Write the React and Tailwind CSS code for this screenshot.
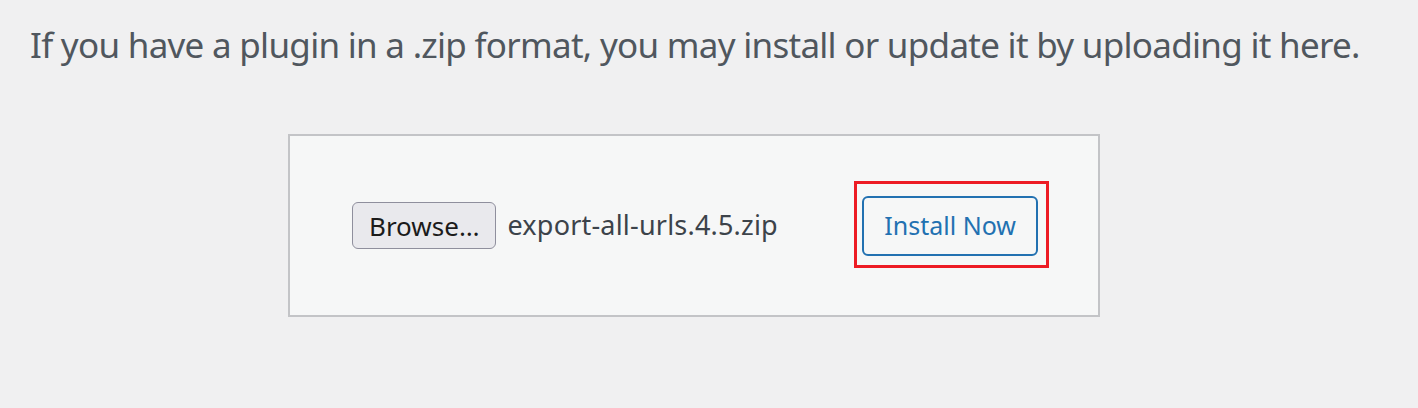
export default function App() {
  return (
    <div className="min-h-[408px] w-[1418px] bg-[#f0f0f1] font-['Noto_Sans',sans-serif] overflow-hidden">
      <p className="pl-[30px] pt-[21px] text-[35px] tracking-[-0.72px] leading-[48px] text-[#50575e] whitespace-nowrap">
        If you have a plugin in a .zip format, you may install or update it by uploading it here.
      </p>
      <div className="ml-[288px] mt-[65px] w-[812px] h-[183px] border-2 border-[#c3c4c7] bg-[#f6f7f7] pl-[62px] pr-[60px] flex items-center justify-between">
        <div className="flex items-center gap-[11px]">
          <button className="h-[47px] px-[16px] border border-[#8f8f9d] rounded-[6px] bg-[#e9e9ed] text-[26px] leading-none text-[#1b1b1b]">
            Browse…
          </button>
          <span className="text-[27px] tracking-[0.2px] text-[#3c434a]">export-all-urls.4.5.zip</span>
        </div>
        <div className="relative">
          <button className="h-[60px] px-[20px] border-2 border-[#2271b1] rounded-[6px] bg-[#f6f7f7] text-[25px] leading-none text-[#2271b1]">
            Install Now
          </button>
          <div className="absolute left-[-8px] right-[-11px] top-[-15px] bottom-[-12px] border-[3px] border-[#ed1c24] pointer-events-none" />
        </div>
      </div>
    </div>
  );
}
